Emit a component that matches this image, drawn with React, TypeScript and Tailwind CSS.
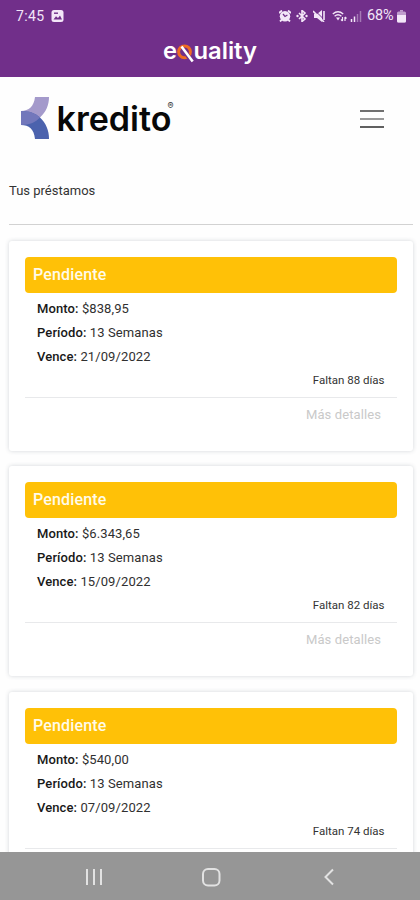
import React from 'react';

interface Loan {
  amount: string;
  period: string;
  due: string;
  daysLeft: number;
}

const loans: Loan[] = [
  { amount: '$838,95', period: '13 Semanas', due: '21/09/2022', daysLeft: 88 },
  { amount: '$6.343,65', period: '13 Semanas', due: '15/09/2022', daysLeft: 82 },
  { amount: '$540,00', period: '13 Semanas', due: '07/09/2022', daysLeft: 74 },
];

function StatusBar() {
  return (
    <div className="flex h-8 items-center justify-between pl-4 pr-[14px] text-[#f3e6f8]">
      <div className="flex items-center gap-[4px]">
        <span className="w-[31px] whitespace-nowrap text-[14px] leading-none tracking-[0.4px]">7:45</span>
        <svg width="13" height="12" viewBox="0 0 13 12">
          <rect x="0.5" width="12" height="12" rx="2.5" fill="currentColor" />
          <path d="M2.5 9.5 5 6.2l2 1.8 2-2.5 2 4z" fill="#712f8a" />
          <rect x="3" y="2.5" width="4" height="1.4" fill="#712f8a" />
        </svg>
      </div>
      <div className="flex items-center">
        {/* alarm */}
        <svg className="mr-[5px]" width="12" height="12" viewBox="0 0 12 12">
          <path d="M0 3 3 .5M12 3 9 .5M1 11.500l2-2M11 11.500l-2-2" stroke="currentColor" strokeWidth="1.800" />
          <circle cx="6" cy="6.2" r="5.200" fill="currentColor" />
          <path d="M4 4 6 6.500l2.400-1.500" fill="none" stroke="#712f8a" strokeWidth="1.3" />
        </svg>
        {/* bluetooth */}
        <svg className="mr-[5px]" width="12" height="12" viewBox="0 0 12 12">
          <path d="M3 3l6 6-3 2.5V.5L9 3 3 9" fill="none" stroke="currentColor" strokeWidth="1.6" />
          <circle cx="1.500" cy="6" r="1.200" fill="currentColor" />
          <circle cx="10.500" cy="6" r="1.200" fill="currentColor" />
        </svg>
        {/* muted speaker */}
        <svg className="mr-[6px]" width="13" height="12" viewBox="0 0 13 12">
          <path d="M1 4h3l5-4v12L4 8H1z" fill="currentColor" />
          <path d="M2 .5l10 10" stroke="#712f8a" strokeWidth="1" />
          <path d="M0 1l11 11M11 1v9" stroke="currentColor" strokeWidth="1.600" />
        </svg>
        {/* wifi */}
        <svg className="mr-[3px]" width="15" height="12" viewBox="0 0 15 12">
          <path d="M.8 4q5.2-4.500 10.400 0M2.600 6.200q3.400-2.800 6.800 0" fill="none" stroke="currentColor" strokeWidth="1.4" />
          <path d="M4 7.500h4L6 10.500z" fill="currentColor" />
          <path d="M10.500 7v4M9 9.500l1.500 1.500M13 11V7M14.500 8.500 13 7" fill="none" stroke="currentColor" strokeWidth="1.2" />
        </svg>
        {/* signal */}
        <svg className="mr-[5px]" width="12" height="12" viewBox="0 0 12 12">
          <path d="M1.500 9v3M4.500 6.500V12" stroke="currentColor" strokeWidth="1.500" />
          <path d="M7.500 4v8M10.500 1v11" stroke="currentColor" strokeWidth="1.500" opacity="0.4" />
        </svg>
        <span className="w-[28px] whitespace-nowrap text-[14.5px] leading-none tracking-[-0.2px]">68%</span>
        {/* battery */}
        <svg className="ml-[2px]" width="9" height="13" viewBox="0 0 9 13">
          <path d="M3 0h3v1.500H3z" fill="currentColor" opacity="0.6" />
          <rect y="1.500" width="9" height="11" rx="1.500" fill="currentColor" opacity="0.6" />
          <path d="M0 5h9v6q0 1.500-1.500 1.500h-6Q0 12.500 0 11z" fill="currentColor" />
        </svg>
      </div>
    </div>
  );
}

function EqualityLogo() {
  return (
    <svg className="mx-auto block" width="98" height="36" viewBox="0 0 98 36" fill="#fff">
      <g fontFamily="Inter, sans-serif" fontSize="23" fontWeight="600">
        <text x="2" y="26.500" textLength="14" lengthAdjust="spacingAndGlyphs">e</text>
        <text x="32.500" y="26.500" textLength="63.500" lengthAdjust="spacingAndGlyphs">uality</text>
      </g>
      <circle cx="23.500" cy="19.800" r="5.900" fill="none" stroke="#ef6b22" strokeWidth="3" />
      <path d="M22.500 18 30 28" stroke="#712f8a" strokeWidth="4.500" />
      <path d="M20.500 14.500 31.700 29.500" stroke="#fff" strokeWidth="2.600" />
    </svg>
  );
}

function KreditoLogo() {
  return (
    <svg width="156" height="48" viewBox="0 0 156 48">
      <path d="M14 2h14c0 8-3 15-9 20.500L0 30V16c8 0 13-5 14-14z" fill="#a49acb" />
      <path d="M0 16c8 0 14 2 19 6.500 6 5.500 9 13 9 21.500H14C13 34 8 30 0 30z" fill="#4b62ad" />
      <path d="M0 16c8 0 14 2 19 6.500C15 27 9 30 0 30z" fill="#7277bb" />
      <text x="35.500" y="35.500" fontFamily="Inter, sans-serif" fontSize="33.500" fontWeight="600" textLength="115" lengthAdjust="spacingAndGlyphs" fill="#080808">
        kredito
      </text>
      <text x="146.500" y="14" fontFamily="Inter, sans-serif" fontSize="9" fill="#333">®</text>
    </svg>
  );
}

function LoanCard({ loan }: { loan: Loan }) {
  return (
    <div className="h-[210px] shrink-0 rounded-[3px] bg-white px-4 pt-4 shadow-[0_0_4px_rgba(60,75,90,0.22)]">
      <div className="flex h-9 items-center rounded-[4px] bg-[#ffc107] px-[8px] text-[16px] font-medium tracking-[0.15px] text-[#fffbea]">
        Pendiente
      </div>
      <div className="pl-3 pt-[4px] text-[13px] leading-6 tracking-[0.1px] text-[#303030]">
        <p><span className="font-medium text-[#181818]">Monto:</span> {loan.amount}</p>
        <p><span className="font-medium text-[#181818]">Período:</span> {loan.period}</p>
        <p><span className="font-medium text-[#181818]">Vence:</span> {loan.due}</p>
      </div>
      <p className="-mt-px pr-[12.5px] text-right text-[11.5px] leading-6 text-[#333]">
        Faltan {loan.daysLeft} días
      </p>
      <div className="mt-[5px] border-t border-[#e8e9eb] pr-4 pt-[5px] text-right text-[13px] leading-6 tracking-[0.1px] text-[#c9c9c9]">
        Más detalles
      </div>
    </div>
  );
}

function NavBar() {
  return (
    <nav className="flex h-12 shrink-0 items-center bg-[#969696] pb-[1px] pt-[2px] pl-[84px] text-[#e2e2e2]">
      <svg width="20" height="18" viewBox="0 0 20 18">
        <path d="M3 1v16M10 1v16M17 1v16" stroke="currentColor" strokeWidth="2" />
      </svg>
      <svg className="ml-[97px]" width="20" height="20" viewBox="0 0 20 20">
        <rect x="2" y="2" width="16.500" height="16.500" rx="5" fill="none" stroke="currentColor" strokeWidth="2" />
      </svg>
      <svg className="ml-[101px]" width="14" height="18" viewBox="0 0 14 18">
        <path d="M11 1.500 3.500 9l7.500 7.500" fill="none" stroke="currentColor" strokeWidth="2" />
      </svg>
    </nav>
  );
}

export default function App() {
  return (
    <div className="flex h-[900px] w-[420px] flex-col overflow-hidden bg-[#fefefe] font-[Roboto,sans-serif]">
      <header className="h-[77px] shrink-0 bg-[#712f8a]">
        <StatusBar />
        <EqualityLogo />
      </header>

      <main className="min-h-0 flex-1 overflow-hidden pl-[9px] pr-[7px]">
        <div className="flex h-[83px] items-center justify-between pl-3 pr-[29px]">
          <KreditoLogo />
          <button aria-label="Menú" className="flex w-6 flex-col gap-[6px]">
            <span className="h-[2px] bg-[#707070]" />
            <span className="h-[2px] bg-[#9a9a9a]" />
            <span className="h-[2px] bg-[#606060]" />
          </button>
        </div>

        <h1 className="mt-[21px] text-[13px] leading-5 text-[#333]">Tus préstamos</h1>
        <hr className="mt-[23px] border-t border-[#d2d2d2]" />

        {/* Loan list */}
        <div className="mt-4 flex flex-col gap-[15.3px]">
          {loans.map(loan => <LoanCard key={loan.due} loan={loan} />)}
        </div>
      </main>

      <NavBar />
    </div>
  );
}
